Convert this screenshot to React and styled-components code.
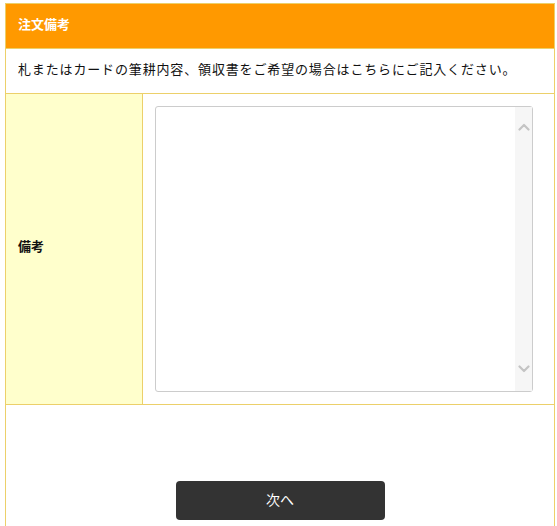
import React from 'react';
import styled, { createGlobalStyle } from 'styled-components';

const GlobalStyle = createGlobalStyle`
  body {
    margin: 0;
    background: #ffffff;
    font-family: "Noto Sans CJK JP", "Noto Sans", sans-serif;
    color: #111111;
  }
`;

const Panel = styled.section`
  margin: 3px 0 0 5px;
  width: 550px;
  border: 1px solid #ecd06a;
  box-sizing: border-box;
`;

const Heading = styled.h2`
  margin: 0;
  height: 45px;
  padding: 0 12px 5px;
  box-sizing: border-box;
  display: flex;
  align-items: center;
  background: #ff9900;
  color: #ffffff;
  font-size: 13px;
  font-weight: 700;
  border-bottom: 1px solid #ecd06a;
`;

const Note = styled.p`
  margin: 0;
  height: 45px;
  padding: 0 12px 5px;
  box-sizing: border-box;
  display: flex;
  align-items: center;
  font-size: 13px;
  letter-spacing: 0.85px;
  border-bottom: 1px solid #ecd06a;
`;

const FieldRow = styled.div`
  display: grid;
  grid-template-columns: 137px 1fr;
  border-bottom: 1px solid #ecd06a;
`;

const Label = styled.div`
  background: #ffffcc;
  border-right: 1px solid #ecd06a;
  padding: 0 12px 7px;
  display: flex;
  align-items: center;
  font-size: 13px;
  font-weight: 700;
`;

const Cell = styled.div`
  padding: 12px 20px 12px 12px;
`;

const Field = styled.div`
  position: relative;
  width: 378px;
  height: 286px;
`;

const TextArea = styled.textarea`
  display: block;
  width: 100%;
  height: 100%;
  box-sizing: border-box;
  border: 1px solid #cccccc;
  border-radius: 3px;
  padding: 4px 20px 4px 6px;
  overflow: hidden;
  resize: none;
  font-family: inherit;
  font-size: 13px;
`;

const Track = styled.div`
  position: absolute;
  top: 1px;
  right: 1px;
  bottom: 1px;
  width: 17px;
  background: #f6f6f6;
  display: flex;
  flex-direction: column;
  justify-content: space-between;
  align-items: center;
  padding: 16px 0 18px;
  box-sizing: border-box;
  pointer-events: none;
`;

const Arrow = ({ down }) => (
  <svg width="12" height="8" viewBox="0 0 12 8">
    <path
      d={down ? 'M1.5 1.5 L6 6 L10.5 1.5' : 'M1.5 6.5 L6 2 L10.5 6.5'}
      fill="none"
      stroke="#c4c4c4"
      strokeWidth="2.2"
      strokeLinecap="round"
      strokeLinejoin="round"
    />
  </svg>
);

const Actions = styled.div`
  height: 140px;
  display: flex;
  justify-content: center;
  align-items: flex-start;
  padding-top: 76px;
  box-sizing: border-box;
`;

const NextButton = styled.button`
  width: 209px;
  height: 39px;
  padding: 0 0 4px;
  background: #333333;
  color: #ffffff;
  border: none;
  border-radius: 4px;
  font-family: inherit;
  font-size: 14px;
  cursor: pointer;
`;

export default function App() {
  return (
    <>
      <GlobalStyle />
      <Panel>
        <Heading>注文備考</Heading>
        <Note>札またはカードの筆耕内容、領収書をご希望の場合はこちらにご記入ください。</Note>
        <FieldRow>
          <Label>備考</Label>
          <Cell>
            <Field>
              <TextArea />
              <Track>
                <Arrow />
                <Arrow down />
              </Track>
            </Field>
          </Cell>
        </FieldRow>
        <Actions>
          <NextButton type="button">次へ</NextButton>
        </Actions>
      </Panel>
    </>
  );
}
